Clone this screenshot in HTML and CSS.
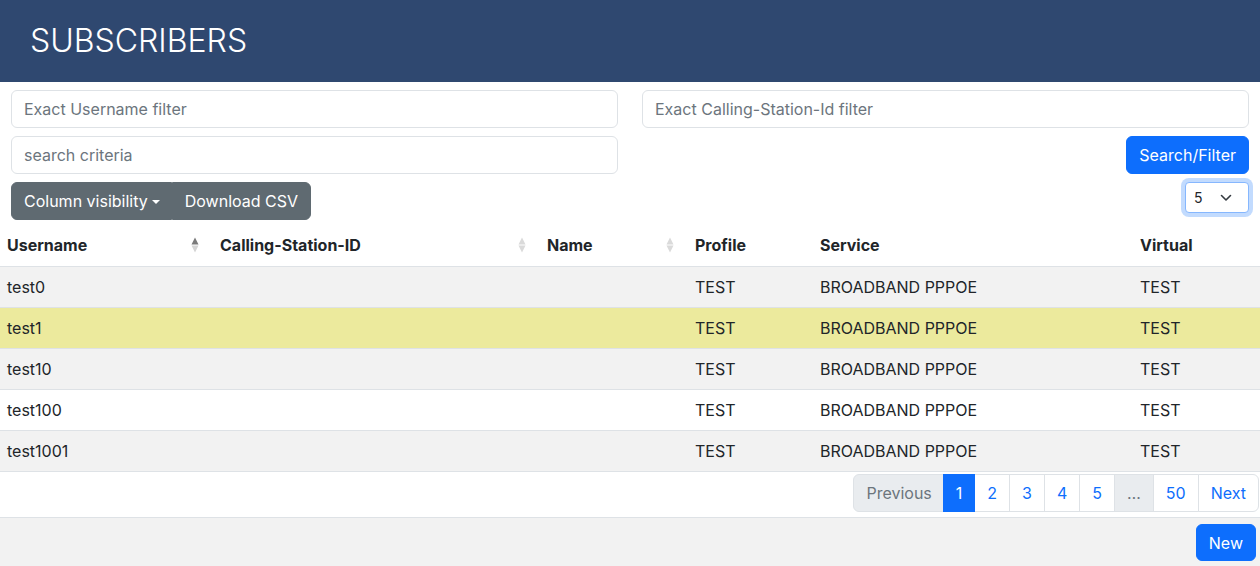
FILE: index.html
```html
<!DOCTYPE html>
<html lang="en">
<head>
<meta charset="utf-8">
<title>Subscribers</title>
<link rel="stylesheet" href="styles.css">
</head>
<body>
<header class="topbar"><h1 class="title">SUBSCRIBERS</h1></header>
<main class="page">
  <section class="filters">
    <input class="field" type="text" placeholder="Exact Username filter">
    <input class="field" type="text" placeholder="Exact Calling-Station-Id filter">
    <input class="field" type="text" placeholder="search criteria">
    <button class="btn btn-primary end" type="button">Search/Filter</button>
    <div class="btn-group">
      <button class="btn btn-secondary" type="button">Column visibility<span class="caret"></span></button>
      <button class="btn btn-secondary" type="button">Download CSV</button>
    </div>
    <div class="select end">
      <span>5</span>
      <svg class="chev" width="12" height="8" viewBox="0 0 12 8"><path d="M1.5 1.5 6 6l4.5-4.5" fill="none" stroke="#343a40" stroke-width="1.6" stroke-linecap="round" stroke-linejoin="round"/></svg>
    </div>
  </section>

  <table class="grid">
    <colgroup>
      <col class="c1"><col class="c2"><col class="c3"><col class="c4"><col class="c5"><col class="c6">
    </colgroup>
    <thead>
      <tr>
        <th class="sortable"><span class="th-in">Username<svg class="sort" width="8" height="20" viewBox="0 0 8 20"><path d="M4 2.5 7.5 9.5H.5z" fill="#7a7a7a"/><path d="M.5 10.5h7L4 17.5z" fill="#d4d4d4"/></svg></span></th>
        <th class="sortable"><span class="th-in">Calling-Station-ID<svg class="sort" width="8" height="20" viewBox="0 0 8 20"><path d="M4 2.5 7.5 9.5H.5z" fill="#dadada"/><path d="M.5 10.5h7L4 17.5z" fill="#dadada"/></svg></span></th>
        <th class="sortable"><span class="th-in">Name<svg class="sort" width="8" height="20" viewBox="0 0 8 20"><path d="M4 2.5 7.5 9.5H.5z" fill="#dadada"/><path d="M.5 10.5h7L4 17.5z" fill="#dadada"/></svg></span></th>
        <th>Profile</th>
        <th>Service</th>
        <th>Virtual</th>
      </tr>
    </thead>
    <tbody>
      <tr class="odd"><td>test0</td><td></td><td></td><td>TEST</td><td>BROADBAND PPPOE</td><td>TEST</td></tr>
      <tr class="selected"><td>test1</td><td></td><td></td><td>TEST</td><td>BROADBAND PPPOE</td><td>TEST</td></tr>
      <tr class="odd"><td>test10</td><td></td><td></td><td>TEST</td><td>BROADBAND PPPOE</td><td>TEST</td></tr>
      <tr><td>test100</td><td></td><td></td><td>TEST</td><td>BROADBAND PPPOE</td><td>TEST</td></tr>
      <tr class="odd"><td>test1001</td><td></td><td></td><td>TEST</td><td>BROADBAND PPPOE</td><td>TEST</td></tr>
    </tbody>
  </table>

  <nav class="pager-row">
    <ul class="pagination">
      <li class="pg disabled first">Previous</li>
      <li class="pg active">1</li>
      <li class="pg">2</li>
      <li class="pg">3</li>
      <li class="pg">4</li>
      <li class="pg">5</li>
      <li class="pg disabled">…</li>
      <li class="pg">50</li>
      <li class="pg last">Next</li>
    </ul>
  </nav>
</main>
<footer class="footer">
  <button class="btn btn-primary" type="button">New</button>
</footer>
</body>
</html>
```

FILE: styles.css
```css
* { box-sizing: border-box; }
html, body { margin: 0; padding: 0; }
body {
  font-family: Inter, "Noto Sans", "Liberation Sans", sans-serif;
  font-size: 16px;
  line-height: 24px;
  color: #212529;
  background: #f2f2f2;
  width: 1260px;
  height: 566px;
  overflow: hidden;
}

.topbar {
  background: #2f4870;
  height: 82px;
  display: flex;
  align-items: center;
  padding: 0 30px;
}
.title {
  margin: 0;
  color: #fff;
  font-size: 32px;
  font-weight: 300;
  line-height: 38px;
}

.page { background: #fff; }

.filters {
  display: grid;
  grid-template-columns: 1fr 1fr;
  column-gap: 24px;
  row-gap: 8px;
  padding: 8px 11px 5px;
}
.end { justify-self: end; }

.field {
  font: inherit;
  height: 38px;
  padding: 6px 12px;
  border: 1px solid #dee2e6;
  border-radius: 6px;
  color: #212529;
  background: #fff;
  outline: none;
}
.field::placeholder { color: #6c757d; opacity: 1; }

.btn {
  font: inherit;
  height: 38px;
  padding: 6px 12px;
  border: 1px solid transparent;
  border-radius: 6px;
  cursor: pointer;
  white-space: nowrap;
}
.btn-primary { background: #0d6efd; color: #fff; border-color: #0d6efd; }
.btn-secondary { background: #5f6a71; color: #fff; border-color: #5f6a71; }

.btn-group { display: flex; justify-self: start; }
.btn-group .btn { border-radius: 0; }
.btn-group .btn:first-child { border-radius: 6px 0 0 6px; padding-right: 11px; }
.btn-group .btn:last-child { border-radius: 0 6px 6px 0; }
.caret {
  display: inline-block;
  margin-left: 4px;
  vertical-align: 3px;
  border-top: 4px solid #fff;
  border-left: 4px solid transparent;
  border-right: 4px solid transparent;
}

.select {
  align-self: start;
  width: 64px;
  height: 31px;
  display: flex;
  align-items: center;
  justify-content: space-between;
  padding: 0 16px 0 8px;
  font-size: 14px;
  border: 1px solid #86b7fe;
  border-radius: 4px;
  box-shadow: 0 0 0 4px rgba(13, 110, 253, .25);
  background: #fff;
}

.grid {
  width: 100%;
  border-collapse: collapse;
  table-layout: fixed;
}
.c1 { width: 213px; }
.c2 { width: 327px; }
.c3 { width: 148px; }
.c4 { width: 125px; }
.c5 { width: 320px; }
.c6 { width: 127px; }

.grid th, .grid td {
  text-align: left;
  padding: 8px 7px;
  height: 41px;
  border-bottom: 1px solid #dee2e6;
  vertical-align: middle;
}
.grid th { font-weight: 700; font-size: 16px; background: #fff; }
.grid th.sortable { padding-right: 14px; }
.th-in { display: flex; justify-content: space-between; align-items: center; }
.sort { display: block; }
.grid tbody tr { background: #fff; }
.grid tbody tr.odd { background: #f2f2f2; }
.grid tbody tr.selected { background: #ecea9d; }

.pager-row {
  display: flex;
  justify-content: flex-end;
  padding: 2px 1px 5px 0;
  border-bottom: 1px solid #dee2e6;
}
.pagination {
  display: flex;
  list-style: none;
  margin: 0;
  padding: 0;
}
.pg {
  padding: 6px 12px;
  border: 1px solid #dee2e6;
  margin-left: -1px;
  color: #0d6efd;
  background: #fff;
  line-height: 24px;
}
.pg.first { border-radius: 6px 0 0 6px; margin-left: 0; padding-right: 11px; }
.pg.last { border-radius: 0 6px 6px 0; }
.pg.disabled { background: #e9ecef; color: #6c757d; }
.pg.active { background: #0d6efd; border-color: #0d6efd; color: #fff; position: relative; }

.footer {
  display: flex;
  justify-content: flex-end;
  padding: 6px 4px;
}
.footer .btn { height: 37px; padding: 6px 12px; }
```
